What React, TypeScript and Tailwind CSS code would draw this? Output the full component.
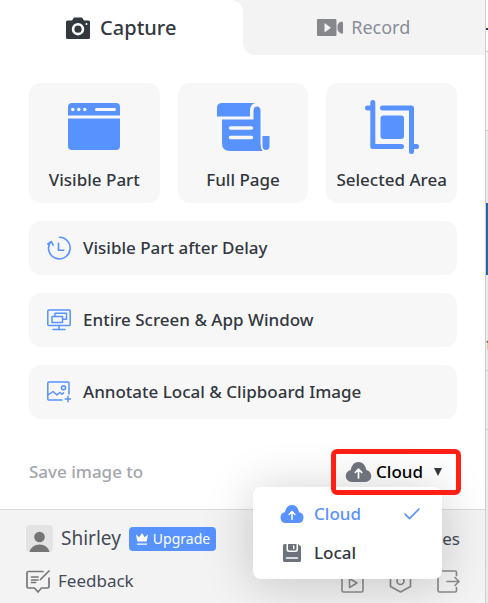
import { useState } from "react";
import type { ReactNode } from "react";

type IconProps = { className?: string };

function CameraIcon({ className }: IconProps) {
  return (
    <svg viewBox="0 0 24 22" className={className} aria-hidden="true">
      <path
        fill="currentColor"
        fillRule="evenodd"
        d="M1.500 3.500H6L8 .5h8l2 3h4.500Q24 3.500 24 5v15.500Q24 22 22.500 22h-21Q0 22 0 20.500V5Q0 3.500 1.500 3.500ZM12 6a6.200 6.200 0 1 0 0 12.400A6.200 6.200 0 0 0 12 6Zm8.500 0a1 1 0 1 0 0 2 1 1 0 0 0 0-2Z"
      />
      <circle cx="12" cy="12.200" r="3.600" fill="currentColor" />
    </svg>
  );
}

function VideoIcon({ className }: IconProps) {
  return (
    <svg viewBox="0 0 26 17" className={className} aria-hidden="true">
      <path
        fill="currentColor"
        fillRule="evenodd"
        d="M1 0h17.500q1 0 1 1v15q0 1-1 1H1q-1 0-1-1V1q0-1 1-1Zm6.500 4v9.500l6.500-4.800Z"
      />
      <path fill="currentColor" d="M20.500 6.500q1-3.500 4-4Q26 2.500 26 4v9.500q0 1.500-1.500 1.200-3-.7-4-4Z" />
    </svg>
  );
}

function BrowserIcon({ className }: IconProps) {
  return (
    <svg viewBox="0 0 52 48" className={className} aria-hidden="true">
      <path fill="currentColor" d="M4 0h44q4 0 4 4v8.500H0V4q0-4 4-4ZM0 15.500h52V43q0 4-4 4H4q-4 0-4-4Z" />
      <g fill="#f7f7f7">
        <circle cx="4.800" cy="6.500" r="1.700" />
        <circle cx="10.800" cy="6.500" r="1.700" />
        <circle cx="16.800" cy="6.500" r="1.700" />
        <rect x="27" y="5" width="21" height="3" rx="1.500" />
      </g>
    </svg>
  );
}

function ScrollIcon({ className }: IconProps) {
  return (
    <svg viewBox="0 0 52 49" className={className} aria-hidden="true">
      <path
        fill="currentColor"
        d="M5 0h33q-5 1.500-5 7.500v6H0V5q0-5 5-5ZM5 16.500h31.500V8q0-4.500 3.500-4.500t3.500 4.500v32q0 5 2 8H13q-8 0-8-8ZM45.500 33h7v10q0 4-3.500 4t-3.500-4Z"
      />
      <path stroke="#f7f7f7" strokeWidth="3.500" strokeLinecap="round" d="M13.500 25h21M13.500 34.500h21" />
    </svg>
  );
}

function CropIcon({ className }: IconProps) {
  return (
    <svg viewBox="0 0 54 54" className={className} aria-hidden="true">
      <g fill="none" stroke="currentColor" strokeWidth="5" strokeLinecap="round" strokeLinejoin="round">
        <path d="M2.500 8h5.300M7.800 2.500V46.500H36.500M17.500 8h29v43.500M46.500 46.500h5" />
      </g>
      <rect x="15.500" y="15.500" width="23.500" height="23.500" rx="3" fill="currentColor" />
    </svg>
  );
}

function DelayIcon({ className }: IconProps) {
  return (
    <svg viewBox="0 0 24 24" className={className} fill="none" stroke="currentColor" strokeWidth="1.600" strokeLinecap="round" aria-hidden="true">
      <path d="M12.500 1.300A10.800 10.800 0 1 1 3.300 6.200M.8 8 4.300 5.700l1.900 3.500M11.500 7.200v7h5.300" />
    </svg>
  );
}

function ScreenIcon({ className }: IconProps) {
  return (
    <svg viewBox="0 0 24 22" className={className} fill="none" stroke="currentColor" strokeWidth="1.500" strokeLinejoin="round" strokeLinecap="round" aria-hidden="true">
      <rect x=".8" y="1" width="22.400" height="15.500" rx="1" />
      <path d="M5 7.500h10.500v6H5ZM8 7.500v-3.300h11.500v6h-4M12 16.500v3.700M6 20.500h12" />
    </svg>
  );
}

function AnnotateIcon({ className }: IconProps) {
  return (
    <svg viewBox="0 0 24 22" className={className} fill="none" stroke="currentColor" strokeWidth="1.500" strokeLinejoin="round" strokeLinecap="round" aria-hidden="true">
      <path d="M15 19H1.800q-1 0-1-1V2q0-1 1-1H21q1 0 1 1v11M1 14l5-3.500 4 3.500 3-2.500 2 1.700 1.500-1.300M21 15.200v5.600M18.200 18h5.600" />
      <circle cx="16.500" cy="6.800" r="2" />
    </svg>
  );
}

function CloudIcon({ className }: IconProps) {
  return (
    <svg viewBox="0 0 26 20" className={className} aria-hidden="true">
      <path fill="currentColor" d="M6 20a6 6 0 0 1-.8-11.900Q6.800 0 13 0t7.800 8.100A6 6 0 0 1 20 20Z" />
      <path fill="none" stroke="#fff" strokeWidth="1.700" strokeLinecap="round" strokeLinejoin="round" d="M13 16V7.500M9.800 10.500 13 7.200l3.200 3.300" />
    </svg>
  );
}

function DiskIcon({ className }: IconProps) {
  return (
    <svg viewBox="0 0 18 18" className={className} aria-hidden="true">
      <path fill="currentColor" d="M1.500 0h2v5.500Q3.500 8 6 8h6.500Q15 8 15 5.500V0l3 2.500v14q0 1.500-1.500 1.500h-15Q0 18 0 16.500v-15Q0 0 1.500 0Z" />
      <path fill="currentColor" d="M5 0h8.500v5q0 1.500-1.500 1.500H6.500Q5 6.500 5 5Z" />
      <path stroke="#fff" strokeWidth="1.400" strokeLinecap="round" d="M10.700 2v2.500M3.500 14h11" />
    </svg>
  );
}

function CheckIcon({ className }: IconProps) {
  return (
    <svg viewBox="0 0 16 12" className={className} fill="none" stroke="currentColor" strokeWidth="1.700" strokeLinecap="round" strokeLinejoin="round" aria-hidden="true">
      <path d="m1 6 4.500 4.700L15 1" />
    </svg>
  );
}

function AvatarIcon({ className }: IconProps) {
  return (
    <svg viewBox="0 0 27 27" className={className} aria-hidden="true">
      <circle cx="13.500" cy="12" r="5.300" fill="#757575" />
      <path fill="#757575" d="M3.500 27q2-7.500 10-7.500t10 7.500Z" />
    </svg>
  );
}

function CrownIcon({ className }: IconProps) {
  return (
    <svg viewBox="0 0 14 14" className={className} fill="currentColor" aria-hidden="true">
      <path d="m1 2.500 3.300 2.700L7 1l2.700 4.200L13 2.500 11.700 9.500H2.300ZM2 11.500h10v1.300H2Z" />
    </svg>
  );
}

function FeedbackIcon({ className }: IconProps) {
  return (
    <svg viewBox="0 0 24 23" className={className} fill="none" stroke="currentColor" strokeWidth="1.700" strokeLinecap="round" strokeLinejoin="round" aria-hidden="true">
      <path d="M17 1.500H2.500q-1.500 0-1.500 1.500v13.500q0 1.500 1.500 1.500h6l3.500 4 3.500-4h6q1.500 0 1.500-1.500V8M14.500 9.500 23 1M5.500 7h6.500M5.500 10h6.500M5.500 12.500h4" />
    </svg>
  );
}

function PlayIcon({ className }: IconProps) {
  return (
    <svg viewBox="0 0 23 23" className={className} fill="none" stroke="currentColor" strokeWidth="1.600" strokeLinejoin="round" aria-hidden="true">
      <rect x="1" y="1" width="21" height="21" rx="1.500" />
      <path d="M8.500 8.500v9L16 13Z" />
    </svg>
  );
}

function SettingsIcon({ className }: IconProps) {
  return (
    <svg viewBox="0 0 23 24" className={className} fill="none" stroke="currentColor" strokeWidth="1.700" strokeLinejoin="round" aria-hidden="true">
      <path d="M11.500 1 21.500 6.500v11l-10 5.500-10-5.500v-11Z" />
      <circle cx="11.500" cy="12" r="3.500" />
    </svg>
  );
}

function ExitIcon({ className }: IconProps) {
  return (
    <svg viewBox="0 0 23 23" className={className} fill="none" stroke="currentColor" strokeWidth="1.700" strokeLinecap="round" strokeLinejoin="round" aria-hidden="true">
      <path d="M19.500 5.500V2.500q0-1.500-1.500-1.500H2.500Q1 1 1 2.500v18Q1 22 2.500 22H18q1.500 0 1.500-1.500v-3M10 11.500h12M18 7.500l4 4-4 4" />
    </svg>
  );
}

function CaptureCard({ icon, label }: { icon: ReactNode; label: string }) {
  return (
    <button type="button" className="flex h-[120px] flex-col items-center justify-between rounded-xl bg-[#f7f7f7] pt-4 pb-2.5 text-[#5792ff]">
      <span className="flex h-[56px] items-center">{icon}</span>
      <span className="text-[17px] leading-[26px] font-medium whitespace-nowrap text-[#33383f]">{label}</span>
    </button>
  );
}

function CaptureRow({ icon, label }: { icon: ReactNode; label: string }) {
  return (
    <button type="button" className="flex h-[54px] items-center gap-3 rounded-xl bg-[#f7f7f7] px-[18px] text-[#5792ff]">
      {icon}
      <span className="text-[17px] leading-[26px] font-medium whitespace-nowrap text-[#33383f]">{label}</span>
    </button>
  );
}

export default function App() {
  const [target, setTarget] = useState("Cloud");

  return (
    <div className="flex min-h-screen overflow-hidden bg-white font-['Noto_Sans','Open_Sans',sans-serif] text-[#33383f]">
      <main className="flex min-w-0 flex-1 flex-col border-r border-[#cfcfcf]">
        <div role="tablist" className="grid grid-cols-2 bg-[#f3f3f3]">
          <div className="bg-[#f3f3f3]">
            <button type="button" role="tab" aria-selected="true" className="flex h-[55px] w-full items-center justify-center gap-2.5 rounded-tr-xl bg-white text-[20px] font-medium">
              <CameraIcon className="h-[22px] w-6" />
              Capture
            </button>
          </div>
          <div className="bg-white">
            <button type="button" role="tab" aria-selected="false" className="flex h-[55px] w-full items-center justify-center gap-2 rounded-bl-xl bg-[#f3f3f3] text-[18px] text-[#888d98]">
              <VideoIcon className="h-[17px] w-[26px] text-[#85878b]" />
              Record
            </button>
          </div>
        </div>

        <section className="flex flex-col gap-[18px] pt-7 pr-7 pl-[29px]">
          <div className="grid grid-cols-3 gap-[18px]">
            <CaptureCard icon={<BrowserIcon className="h-12 w-[52px]" />} label="Visible Part" />
            <CaptureCard icon={<ScrollIcon className="h-[49px] w-[52px] overflow-visible" />} label="Full Page" />
            <CaptureCard icon={<CropIcon className="h-[54px] w-[54px]" />} label="Selected Area" />
          </div>
          <CaptureRow icon={<DelayIcon className="h-6 w-6" />} label="Visible Part after Delay" />
          <CaptureRow icon={<ScreenIcon className="h-[22px] w-6" />} label="Entire Screen & App Window" />
          <CaptureRow icon={<AnnotateIcon className="h-[22px] w-6" />} label="Annotate Local & Clipboard Image" />
        </section>

        <div className="mt-[30px] mb-3.5 flex items-center justify-between pr-6 pl-[29px]">
          <label htmlFor="save-target" className="text-[17px] font-medium text-[#a3a6ab]">
            Save image to
          </label>
          <div className="relative">
            <div className="relative z-20 flex h-[46px] w-[130px] items-center rounded-md border-5 border-[#ff1f14] pl-[9px] text-black">
              <CloudIcon className="h-5 w-[27px] shrink-0 text-[#6e727d]" />
              <select
                id="save-target"
                value={target}
                onChange={(event) => setTarget(event.target.value)}
                className="w-full appearance-none bg-transparent pl-1 text-[17px] font-medium"
              >
                <option>Cloud</option>
                <option>Local</option>
              </select>
              <svg viewBox="0 0 8 8" className="pointer-events-none absolute right-3.5 h-2 w-2 text-[#33383f]" aria-hidden="true">
                <path fill="currentColor" d="M0 0h8L4 8Z" />
              </svg>
            </div>
            <div className="absolute top-[38px] right-[19px] z-10 flex w-[189px] flex-col rounded-lg bg-white py-[7px] text-[17px] font-medium shadow-[0_4px_50px_rgba(0,0,0,0.2)]">
              <button type="button" onClick={() => setTarget("Cloud")} className="flex h-[39px] items-center gap-2.5 pr-[22px] pl-[27px] text-[#5792ff]">
                <CloudIcon className="h-[18px] w-6" />
                <span>Cloud</span>
                <CheckIcon className="ml-auto h-3 w-4" />
              </button>
              <button type="button" onClick={() => setTarget("Local")} className="flex h-[39px] items-center gap-2.5 pr-[22px] pl-[27px]">
                <span className="flex w-6 justify-center">
                  <DiskIcon className="h-[18px] w-[18px] text-[#6e727d]" />
                </span>
                <span>Local</span>
              </button>
            </div>
          </div>
        </div>

        <footer className="flex flex-1 flex-col gap-4 border-t border-[#dadada] bg-[#f3f3f3] pt-[15px] pr-[25px] pb-[11px] pl-[26px] text-[#454a57]">
          <div className="flex h-[27px] items-center gap-2">
            <span className="h-[27px] w-[27px] overflow-hidden rounded-sm bg-[#e3e3e3]">
              <AvatarIcon className="h-[27px] w-[27px]" />
            </span>
            <span className="text-[19px]">Shirley</span>
            <button type="button" className="flex h-6 items-center gap-1 rounded bg-[#5792ff] px-1.5 text-[14px] text-white">
              <CrownIcon className="h-3.5 w-3.5" />
              Upgrade
            </button>
            <a href="#images" className="ml-auto text-[17px]">
              My Images
            </a>
          </div>
          <div className="flex h-[26px] items-center justify-between">
            <a href="#feedback" className="flex items-center gap-2 text-[17px]">
              <FeedbackIcon className="h-[23px] w-6 text-[#777]" />
              Feedback
            </a>
            <div className="flex items-center gap-[25px] text-[#8c8c8c]">
              <button type="button" aria-label="Recordings">
                <PlayIcon className="h-[23px] w-[23px]" />
              </button>
              <button type="button" aria-label="Settings">
                <SettingsIcon className="h-6 w-[23px]" />
              </button>
              <button type="button" aria-label="Sign out">
                <ExitIcon className="h-[23px] w-[23px]" />
              </button>
            </div>
          </div>
        </footer>
      </main>

      <aside className="flex w-0.5 shrink-0 flex-col bg-[#e9ecea] text-[#5b6370]">
        <div className="h-[52px] border-b border-[#cccccc] bg-white pt-7">
          <div className="h-0.5 bg-[#33384a]" />
        </div>
        <div className="h-[79px] border-b border-[#cccccc] bg-[#f5f5f5]" />
        <div className="h-[72px]" />
        <div className="h-[72px] bg-[#2468a2]" />
        <div className="h-24 border-b border-[#cccccc] pt-[58px] text-[20px] leading-6">t</div>
        <div className="h-[59px] border-b border-[#cccccc]" />
      </aside>
    </div>
  );
}
